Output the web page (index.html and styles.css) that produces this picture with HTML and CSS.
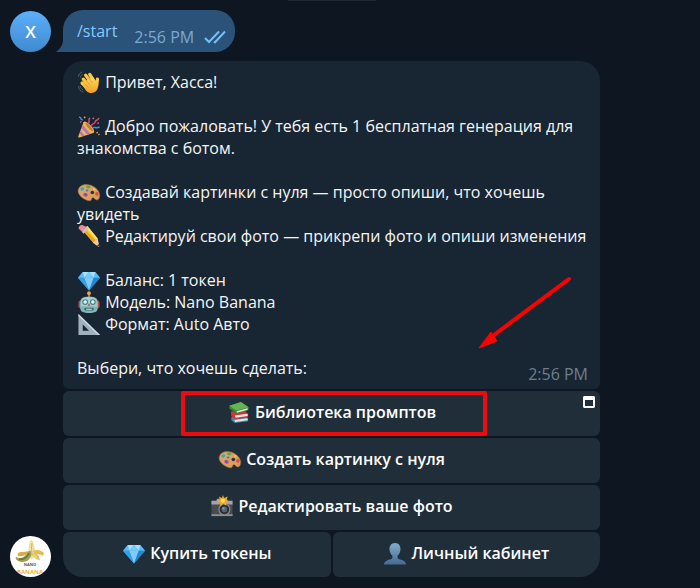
FILE: index.html
```html
<!DOCTYPE html>
<html lang="ru">
  <head>
    <meta charset="UTF-8" />
    <meta name="viewport" content="width=device-width, initial-scale=1.0" />
    <title>Nano Banana</title>
    <link rel="stylesheet" href="styles.css">
  </head>
  <body>
    <!-- emoji -->
    <svg class="defs" aria-hidden="true">
      <defs>
        <linearGradient id="g-skin" x1="0" y1="0" x2="0" y2="1">
          <stop offset="0" stop-color="#ffd95e" />
          <stop offset="1" stop-color="#f0a028" />
        </linearGradient>
        <linearGradient id="g-user" x1="0" y1="0" x2="0" y2="1">
          <stop offset="0" stop-color="#86abcb" />
          <stop offset="1" stop-color="#426c96" />
        </linearGradient>
        <linearGradient id="g-wood" x1="0" y1="0" x2="1" y2="1">
          <stop offset="0" stop-color="#dfa66d" />
          <stop offset="1" stop-color="#d99a56" />
        </linearGradient>
      </defs>
      <symbol id="wave" viewBox="0 0 24 24">
        <g stroke="#fdc943" stroke-linecap="round" stroke-width="3.4">
          <path d="M6 8.500l7 8M8.500 4.500l7 9M12.800 3.600l5 8" />
          <path d="M4.800 12.500l6 6" />
          <path d="M20.800 8.500l-.8 7" />
        </g>
        <path d="M8 11l8-5 4 6c3 5 .5 9-3 10.500-3 1.200-6 0-8-2L6 16z" fill="url(#g-skin)" />
        <path d="M8.500 9.500l5 5.500M11.500 7l4 5.500M6.800 12.800l4.500 4.500" stroke="#d98b20" stroke-width=".7" fill="none" />
        <path d="M1 6c0-2.500 1.500-4 4-5M3 7c0-1.700.8-2.700 2.500-3.500M1 16c.3 3 2 5 5 6M2.500 15.500c.5 2 1.700 3.500 3.500 4.500" stroke="#56646e" stroke-width="1" fill="none" />
      </symbol>
      <symbol id="party" viewBox="0 0 24 24">
        <path d="M6.500 7L17 18.500 2 23.500c-1 .2-1.400-.3-1.200-1z" fill="#f2b64c" />
        <path d="M5.500 10.500l8 9-3 1L4.300 14zM3.300 16.500l4 5-2.500 1-2.500-3.200z" fill="#b073c8" />
        <ellipse cx="11.800" cy="12.800" rx="2.800" ry="7.600" transform="rotate(-43 11.800 12.800)" fill="#f0b650" />
        <ellipse cx="12.300" cy="12.600" rx="1.300" ry="5.600" transform="rotate(-43 12.300 12.600)" fill="#c07a3c" />
        <path d="M11 9c3-1.500-1-4 2-6M14.500 12c0-4 4-2 4-5 0-2 3-1 4-4" stroke="#e44d68" stroke-width="1.500" fill="none" />
        <path d="M1.500 2.500c3-1 1 3 4 2.500M16 14c2-3 3 1 7-1.500" stroke="#5488e8" stroke-width="1.500" fill="none" />
        <path d="M7 2l1 1M20 18l1 1M22 20l.8.8" stroke="#e8ae37" stroke-width="1.800" />
        <path d="M16 3l1 1M3 7l.8.8M21 8l1 1" stroke="#d563a6" stroke-width="1.800" />
      </symbol>
      <symbol id="palette" viewBox="0 0 24 24">
        <path d="M1 8.500C3 3 11 2.300 17 6c5 3 7.500 8 5.500 12-1 2.500-3.500 2-4.500.5-1.200-1.800-3.300-1.300-3.500.5-.2 2.200-3 2-6 .5C3.300 17-.5 12.500 1 8.500z" fill="url(#g-wood)" stroke="#a9713d" stroke-width=".6" />
        <circle cx="15.500" cy="12" r="1.900" fill="#32313a" />
        <path d="M3 7.500c1.500-1.500 4.500-1 4 .8S3.500 11 3 9.500z" fill="#3aabb5" />
        <path d="M9 5c2-1.300 5-.2 4.500 1.500S9.500 8 9 6.500z" fill="#55ad46" />
        <path d="M6.500 13c2-1.300 4.500.2 4 2.200s-4 1-4.500-.5z" fill="#8e4bb4" />
        <path d="M8.500 9.500l2-.8 1.200 1.500-2.200 1z" fill="#3f79d3" />
        <ellipse cx="20.300" cy="13.500" rx="1.800" ry="2" fill="#e14b46" />
        <circle cx="17.500" cy="8.500" r="1.200" fill="#efcc55" />
      </symbol>
      <symbol id="pencil" viewBox="0 0 24 24">
        <path d="M5.500 5L10 1l11 13-4.500 4.500z" fill="#fbc52e" />
        <path d="M5 5.500L7 3.700l12 12.500-2.500 2.300z" fill="#eda21d" />
        <path d="M8.800 2.500L10.500 1l10.500 13-1.500 1.300z" fill="#ffe06b" />
        <path d="M4.500 7L9.500 1.800l2 2.200L6.300 9.200z" fill="#bdc4cb" />
        <path d="M1.300 4C.5 2 3.500-.8 5.700.2L9.500 2 4.700 7z" fill="#ec8b92" />
        <path d="M16 18.500l5-4.700 1.800 8c0 .8-.5 1-1 .8z" fill="#f0cb97" />
        <path d="M20.300 21.500l2.200-1.800.6 3z" fill="#3c3833" />
      </symbol>
      <symbol id="gem" viewBox="0 0 24 24">
        <path d="M5.500 3h13L23.500 9 12 22.500.5 9z" fill="#37a6ee" />
        <path d="M5.500 3L.5 9H7zM18.500 3L17 9h6.500z" fill="#5cbcf5" />
        <path d="M5.500 3h6.500L7 9zM18.500 3H12l5 6z" fill="#a6e1fc" />
        <path d="M12 3L7 9h10z" fill="#72cdf9" />
        <path d="M7 9h10l-5 13.500z" fill="#80cbfa" />
        <path d="M17 9h6.500L12 22.500z" fill="#2386d2" />
        <path d="M.5 9H7l5 13.500z" fill="#389ee6" />
      </symbol>
      <symbol id="robot" viewBox="0 0 24 24">
        <path d="M12 3v4" stroke="#b3813e" stroke-width="2" />
        <circle cx="12" cy="2.300" r="2" fill="#f2a33b" />
        <rect x="1" y="10" width="22" height="8" rx="2" fill="#c34947" />
        <path d="M4 8c3-3 13-3 16 0 2 3 2 10 0 13-3 2.500-13 2.500-16 0-2-3-2-10 0-13z" fill="#83b6b8" />
        <path d="M5 8c3-2 11-2 14 0 1 2 1.500 5 1 8H4c-.5-3 0-6 1-8z" fill="#aad0ce" />
        <circle cx="8" cy="11.500" r="3" fill="#497c88" />
        <circle cx="16" cy="11.500" r="3" fill="#497c88" />
        <circle cx="8" cy="11.500" r="1.800" fill="#d4fff7" />
        <circle cx="16" cy="11.500" r="1.800" fill="#d4fff7" />
        <path d="M12 12.500l1.500 3h-3z" fill="#c64c49" />
        <rect x="7" y="17.500" width="10" height="2.800" rx="1.200" fill="#3a686f" />
        <path d="M9 19h6" stroke="#d5f3ed" />
      </symbol>
      <symbol id="ruler" viewBox="0 0 24 24">
        <path fill-rule="evenodd" d="M1 1l22.500 22H1zM5.500 12v6.500H12z" fill="#a0b0bd" />
        <path d="M1 1l22.500 22h-2.200L1 3z" fill="#ced9e1" />
      </symbol>
      <symbol id="books" viewBox="0 0 24 24">
        <path d="M4 17l14-2 3.500 3.500v2.500L7.500 23 4 20z" fill="#4a86b5" />
        <path d="M7 19.800l14-1.800v2L8 22z" fill="#e8e5db" />
        <path d="M3.500 11l15-1 3 4v3L8 19l-4-3z" fill="#c6383a" />
        <path d="M7.500 15l13.500-1.700v2.400L8.500 17.500z" fill="#efeade" />
        <path d="M2 5l12-4 8 5.500v3L9.500 13 2 8z" fill="#38883a" />
        <path d="M2 5l12-4 8 5.500L9 10z" fill="#63b64d" />
        <path d="M9.500 10.700L21 7.500v1.700L9.800 12.300z" fill="#f3f0e5" />
      </symbol>
      <symbol id="camera" viewBox="0 0 24 24">
        <path d="M1 6h22v16H1z" fill="#4a4b4f" />
        <path d="M1 6h5l1-2h10l1 2h5v4H1z" fill="#a2a4a6" />
        <path d="M1 20h22v2H1z" fill="#8b8d90" />
        <circle cx="14.500" cy="15" r="6.300" fill="#85888b" />
        <circle cx="14.500" cy="15" r="5" fill="#292b30" />
        <circle cx="14.500" cy="15" r="3" fill="#546371" />
        <circle cx="13.500" cy="14" r="1.200" fill="#8ba0ac" />
        <path d="M13 0l1.200 3.200L18 1.500l-1.500 3.600L20 7l-3.700.8.200 3.400-3.200-2-3 2.500-.1-4L6.500 6.500 10 5 8.800 1.500 12 3.200z" fill="#f5a91e" />
        <circle cx="13" cy="6" r="2.200" fill="#ffe160" />
      </symbol>
      <symbol id="user" viewBox="0 0 24 24">
        <path d="M12 1c4 0 6 3 5.700 7-.2 3-1.500 5-3 6.200v2c0 1.800 3 2 5.500 3 2.300.9 3.300 2.300 3.300 4.300H.5c0-2 1-3.400 3.300-4.300 2.500-1 5.500-1.200 5.500-3v-2C7.800 13 6.500 11 6.300 8 6 4 8 1 12 1z" fill="url(#g-user)" />
      </symbol>
    </svg>

    <div class="date"></div>

    <main class="chat">
      <section class="row">
        <div class="avatar avatar-user">X</div>
        <div class="bubble out">
          <svg class="tail" viewBox="0 0 16 18" aria-hidden="true"><path d="M7 0v6c0 5-3 9-7 12h16V0z" /></svg>
          <a href="#start">/start</a>
          <time>2:56 PM</time>
          <svg class="checks" viewBox="0 0 22 14" role="img" aria-label="Прочитано">
            <path d="M1 8l4 4L15 1.500M10 11.500l1 .8L21 1.500" />
          </svg>
        </div>
      </section>

      <section class="row">
        <div class="avatar avatar-bot">
          <svg viewBox="0 0 41 41" role="img" aria-label="Nano Banana">
            <path d="M20 5c-2 6-2 12 1 18 4-1 5-2 5-5-1-5-2-8-3-13l-2-1z" fill="#f1df9c" />
            <path d="M18 17c-2 2-6 4-10 3-1-3 1-4 4-4 4 0 6-1 8-1z" fill="#dea846" />
            <path d="M23 15c4-2 8-1 11 2l-1 3c-3-2-6-2-9-1z" fill="#e8bc55" />
            <path d="M23 16c5 1 6 4 7 8-4 0-6-2-8-6z" fill="#efd274" />
            <path d="M21 15c2 9-6 13-13 10-2-1-3-3-2-4 6 3 9-1 13-6z" fill="#a3a353" />
            <path d="M19 17c-2 5-5 7-10 6" stroke="#657d3d" stroke-width="2" fill="none" />
            <path d="M22 7c-1 5 0 8 0 13M24 17c3 1 4 3 4 6" stroke="#cfb26a" fill="none" />
            <text x="20" y="30" class="logo-top">NANO</text>
            <text x="20" y="38" class="logo-bottom">BANANA</text>
          </svg>
        </div>
        <div class="card">
          <div class="bubble in">
            <p><svg class="emoji"><use href="#wave" /></svg> Привет, Хасса!</p>
            <p><svg class="emoji"><use href="#party" /></svg> Добро пожаловать! У тебя есть 1 бесплатная генерация для знакомства с ботом.</p>
            <p>
              <svg class="emoji"><use href="#palette" /></svg> Создавай картинки с нуля — просто опиши, что хочешь увидеть<br>
              <svg class="emoji"><use href="#pencil" /></svg> Редактируй свои фото — прикрепи фото и опиши изменения
            </p>
            <p>
              <svg class="emoji"><use href="#gem" /></svg> Баланс: 1 токен<br>
              <svg class="emoji"><use href="#robot" /></svg> Модель: Nano Banana<br>
              <svg class="emoji"><use href="#ruler" /></svg> Формат: Auto Авто
            </p>
            <p class="last"><span>Выбери, что хочешь сделать:</span> <time>2:56 PM</time></p>
            <svg class="arrow" viewBox="0 0 96 76" aria-hidden="true">
              <path d="M91 5L16 61" stroke="#f00" stroke-width="4" stroke-linecap="round" />
              <path d="M1 74L13 58l6 9z" fill="#f00" stroke="#f00" />
            </svg>
          </div>
          <div class="keyboard">
            <button class="key wide" type="button">
              <svg class="emoji"><use href="#books" /></svg> Библиотека промптов
              <svg class="webapp" viewBox="0 0 12 12" aria-hidden="true">
                <path fill-rule="evenodd" d="M1 0h10l1 1v10l-1 1H1l-1-1V1zM2 4v6h8V4z" fill="#fff" />
              </svg>
              <span class="mark"></span>
            </button>
            <button class="key wide" type="button"><svg class="emoji"><use href="#palette" /></svg> Создать картинку с нуля</button>
            <button class="key wide" type="button"><svg class="emoji"><use href="#camera" /></svg> Редактировать ваше фото</button>
            <button class="key" type="button"><svg class="emoji"><use href="#gem" /></svg> Купить токены</button>
            <button class="key" type="button"><svg class="emoji"><use href="#user" /></svg> Личный кабинет</button>
          </div>
        </div>
      </section>
    </main>
  </body>
</html>
```
FILE: styles.css
```css
* {
  box-sizing: border-box;
}

body {
  margin: 0;
  background-color: #0e1621;
  color: #f5f5f5;
  font-family: "Open Sans", "Noto Sans", sans-serif;
  font-size: 16px;
  line-height: 22px;
}

.defs {
  position: absolute;
  width: 0;
  height: 0;
}

/* bottom edge of the floating date, scrolled off the top */
.date {
  position: absolute;
  top: 0;
  left: 50%;
  width: 88px;
  height: 1px;
  margin-left: -62px;
  background: #1e2733;
}

.chat {
  display: flex;
  flex-direction: column;
  gap: 9px;
  padding: 10px;
}

.row {
  display: flex;
  align-items: flex-end;
  gap: 12px;
}

.avatar {
  flex: none;
  width: 41px;
  height: 41px;
  border-radius: 50%;
  overflow: hidden;
}

.avatar-user {
  background: linear-gradient(#5caffa, #408acf);
  color: #fff;
  font-size: 17px;
  font-weight: 600;
  line-height: 41px;
  text-align: center;
}

.avatar-bot {
  background: #fff;
}

.avatar-bot svg {
  display: block;
}

.logo-top,
.logo-bottom {
  font-size: 4px;
  font-weight: 700;
  text-anchor: middle;
  fill: #555;
}

.logo-bottom {
  font-size: 6px;
  fill: #e2b544;
}

.bubble {
  position: relative;
}

.bubble time {
  color: #6d7f8f;
}

.out {
  display: flex;
  align-items: center;
  height: 42px;
  padding: 0 9px 0 14px;
  border-radius: 20px 20px 20px 0;
  background: #2b5278;
}

.out a {
  color: #83caff;
  text-decoration: none;
}

.out time {
  margin: 12px 10px 0 17px;
  color: #7da8d3;
}

.tail {
  position: absolute;
  left: -7px;
  bottom: 0;
  width: 16px;
  height: 18px;
  fill: #2b5278;
}

.checks {
  width: 22px;
  height: 14px;
  margin-top: 12px;
  fill: none;
  stroke: #6fc0fc;
  stroke-width: 2;
}

.card {
  flex: 1;
  max-width: 537px;
}

.in {
  padding: 10px 12px 10px 14px;
  border-radius: 20px 20px 6px 6px;
  background: #182533;
}

.in p {
  margin: 0 0 22px;
}

.in .last {
  display: flex;
  justify-content: space-between;
  margin: 0;
}

.last time {
  height: 22px;
  padding-top: 6px;
}

.emoji {
  width: 24px;
  height: 23px;
  margin: -1px 0;
  vertical-align: -5px;
}

.arrow {
  position: absolute;
  right: 26px;
  bottom: 39px;
  width: 96px;
  height: 76px;
}

.keyboard {
  display: grid;
  grid-template-columns: 1fr 1fr;
  gap: 2px;
  margin-top: 2px;
}

.key {
  position: relative;
  height: 45px;
  padding: 0 12px 4px;
  border: 0;
  border-radius: 6px;
  background: #202e3a;
  color: #fff;
  font: inherit;
  font-weight: 600;
}

.wide {
  grid-column: span 2;
}

.key:nth-child(4) {
  border-bottom-left-radius: 20px;
}

.key:nth-child(5) {
  border-bottom-right-radius: 20px;
}

.webapp {
  position: absolute;
  top: 5px;
  right: 5px;
  width: 12px;
  height: 12px;
}

.mark {
  position: absolute;
  inset: 0 21% 0 22%;
  border: 4px solid #ec0b0f;
  border-radius: 2px;
}
```
